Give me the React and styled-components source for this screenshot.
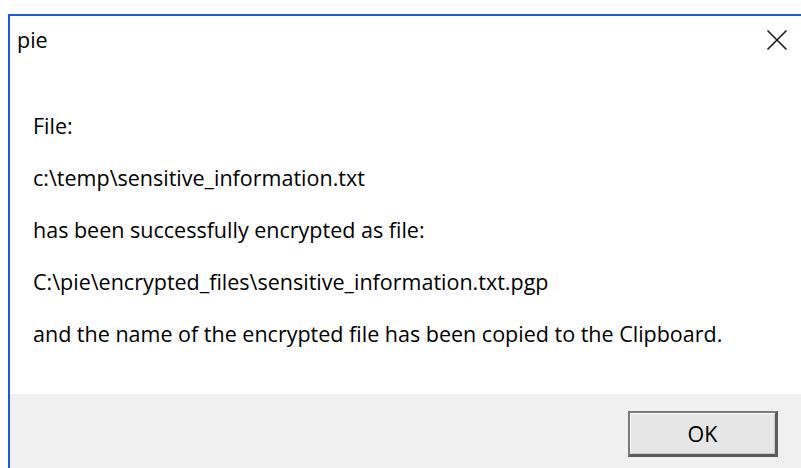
import React from "react";
import styled, { createGlobalStyle } from "styled-components";

const Global = createGlobalStyle`
  html, body {
    margin: 0;
    padding: 0;
    background: #ffffff;
  }
  body {
    width: 801px;
    height: 468px;
    overflow: hidden;
    font-family: "Open Sans", "Noto Sans", "Liberation Sans", sans-serif;
  }
`;

const Desktop = styled.div`
  width: 801px;
  height: 468px;
  padding: 14px 0 0 8px;
  box-sizing: border-box;
  background: #ffffff;
`;

const Window = styled.div`
  height: 100%;
  display: flex;
  flex-direction: column;
  border-top: 2px solid #1a5cd6;
  border-left: 2px solid #1a5cd6;
  background: #ffffff;
`;

const TitleBar = styled.div`
  height: 47px;
  flex: none;
  display: flex;
  align-items: center;
  justify-content: space-between;
  padding: 0 13px 0 7px;
`;

const Title = styled.span`
  font-size: 21.5px;
  color: #000000;
`;

const CloseButton = styled.button`
  width: 22px;
  height: 22px;
  padding: 0;
  border: none;
  background: transparent;
  display: flex;
  align-items: center;
  justify-content: center;
`;

const Body = styled.div`
  flex: 1;
  display: flex;
  flex-direction: column;
  padding: 37px 0 0 23px;
`;

const Line = styled.p`
  margin: 0;
  height: 52px;
  line-height: 52px;
  font-size: 21.5px;
  color: #000000;
  white-space: nowrap;
`;

const Footer = styled.div`
  height: 76px;
  flex: none;
  box-sizing: border-box;
  background: #f0f0f0;
  display: flex;
  align-items: flex-start;
  justify-content: flex-end;
  padding: 17px 23px 0 0;
`;

const OkButton = styled.button`
  width: 150px;
  height: 46px;
  box-sizing: border-box;
  background: #e6e6e6;
  border-style: solid;
  border-color: #7a7a7a #5c5c5c #5c5c5c #7a7a7a;
  border-width: 2px 3px 3px 2px;
  box-shadow: inset 1px 1px 0 #fdfdfd, inset -1px -1px 0 #c8c8c8;
  font-family: "Open Sans", "Noto Sans", "Liberation Sans", sans-serif;
  font-size: 21.5px;
  color: #000000;
  padding: 0;
`;

const lines = [
  "File:",
  "c:\\temp\\sensitive_information.txt",
  "has been successfully encrypted as file:",
  "C:\\pie\\encrypted_files\\sensitive_information.txt.pgp",
  "and the name of the encrypted file has been copied to the Clipboard.",
];

export default function App() {
  return (
    <>
      <Global />
      <Desktop>
        <Window>
          <TitleBar>
            <Title>pie</Title>
            <CloseButton aria-label="Close">
              <svg width="22" height="22" viewBox="0 0 22 22">
                <path d="M1.5 1.5 L20.5 20.5 M20.5 1.5 L1.5 20.5" stroke="#1a1a1a" strokeWidth="1.6" fill="none" />
              </svg>
            </CloseButton>
          </TitleBar>
          <Body>
            {lines.map((text, i) => (
              <Line key={i}>{text}</Line>
            ))}
          </Body>
          <Footer>
            <OkButton>OK</OkButton>
          </Footer>
        </Window>
      </Desktop>
    </>
  );
}
